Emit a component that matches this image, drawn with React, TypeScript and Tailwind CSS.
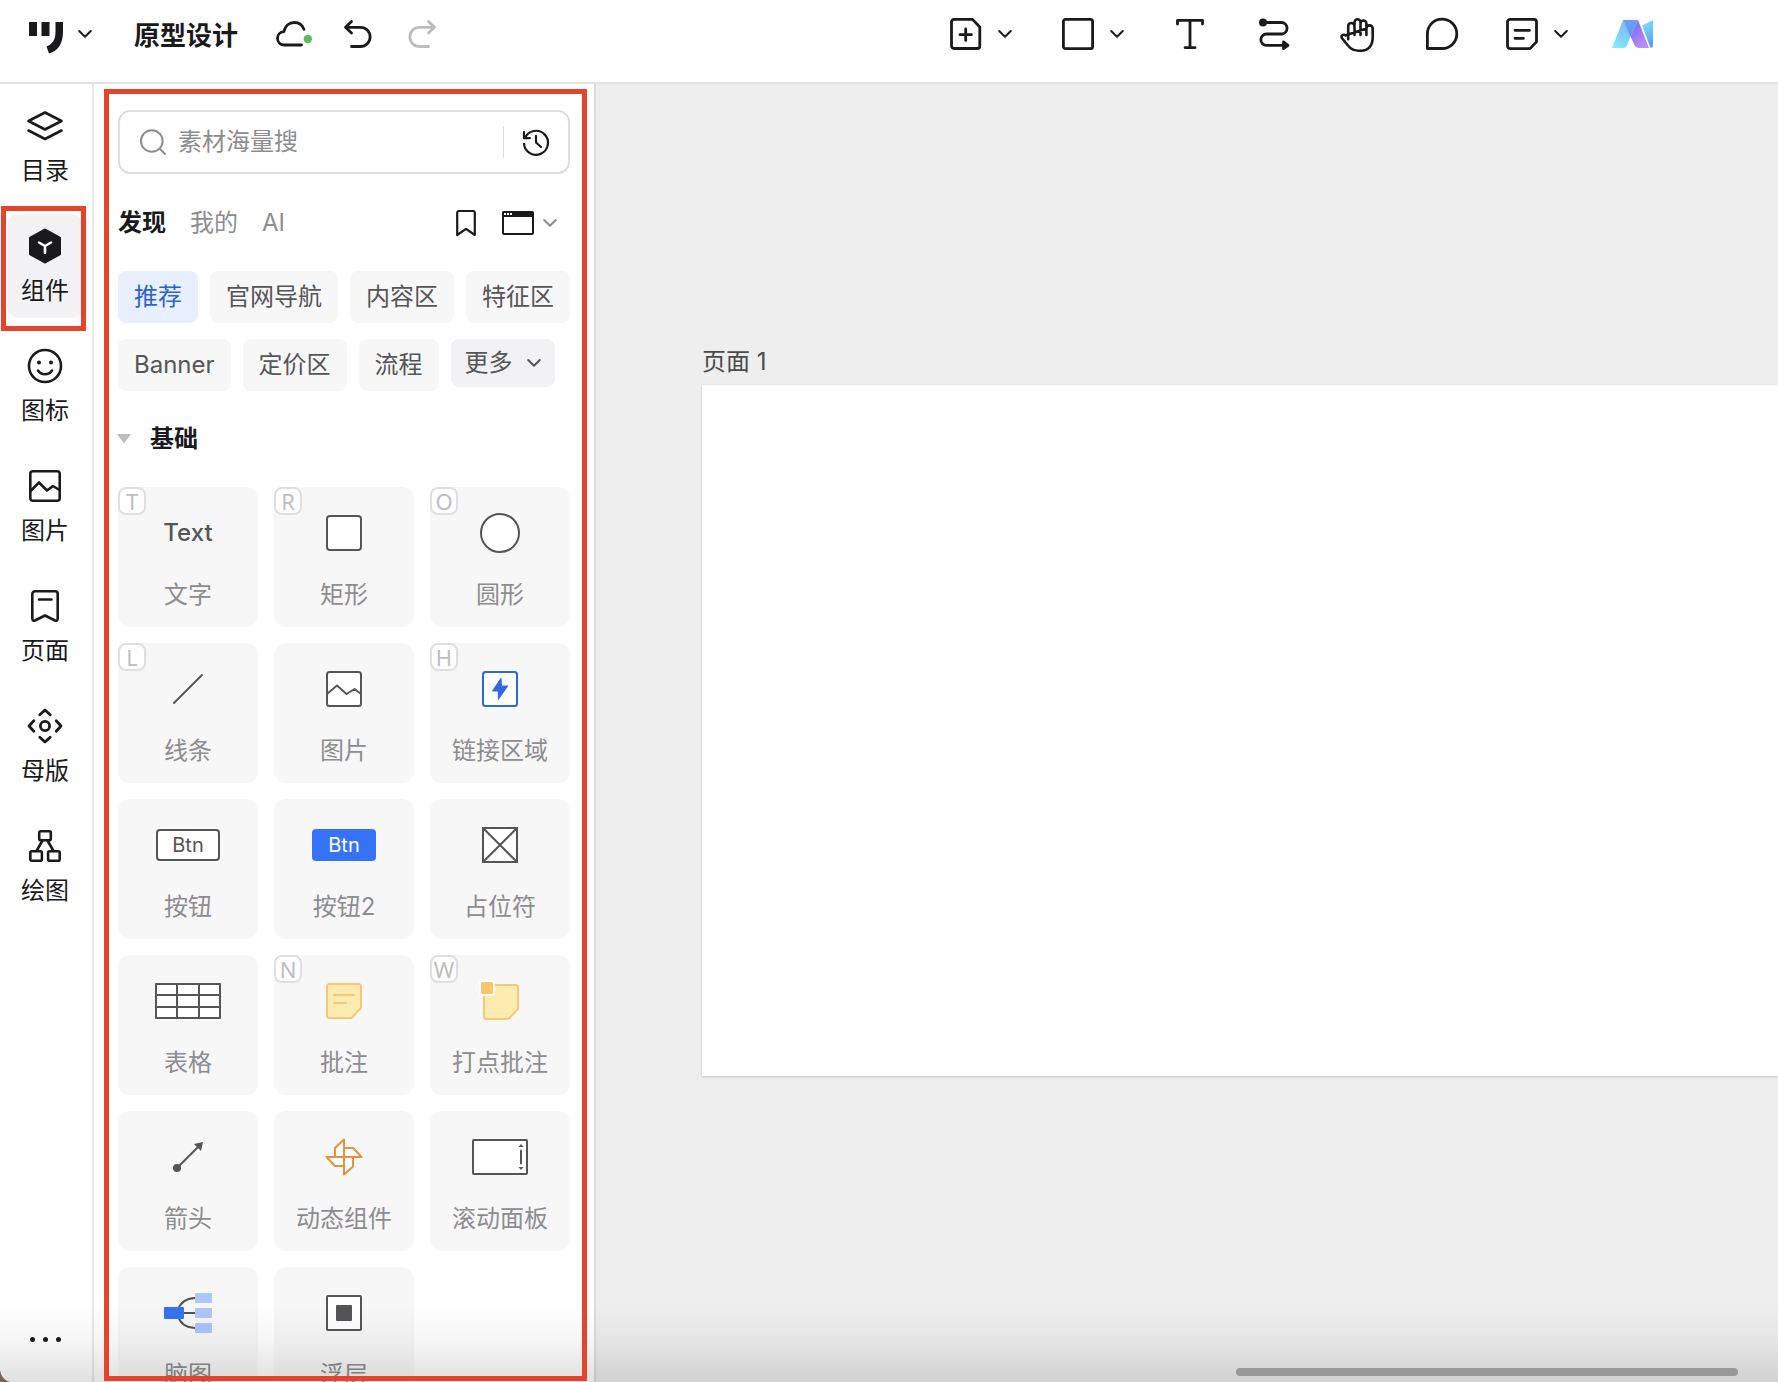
import type { ReactNode } from "react";

const INK = "#1a1a1c";
const GREY = "#555557";

function Icon({
  w,
  h,
  stroke = INK,
  sw = 2,
  children,
}: {
  w: number;
  h: number;
  stroke?: string;
  sw?: number;
  children: ReactNode;
}) {
  return (
    <svg
      width={w}
      height={h}
      viewBox={`0 0 ${w} ${h}`}
      fill="none"
      stroke={stroke}
      strokeWidth={sw}
      strokeLinecap="round"
      strokeLinejoin="round"
      className="shrink-0 overflow-visible"
      aria-hidden="true"
    >
      {children}
    </svg>
  );
}

function Chevron({ stroke = INK }: { stroke?: string }) {
  return (
    <Icon w={14} h={8} stroke={stroke} sw={2}>
      <path d="M1.2 1 7 6.8 12.8 1" />
    </Icon>
  );
}

/* ---------- top bar ---------- */

function Logo() {
  return (
    <Icon w={36} h={40} stroke="none">
      <g fill={INK}>
        <path d="M1 8h8v14H1zM13.500 8h8v14h-8zM27.500 8H35v9c0 12-4 19.500-14 22.500l-2.500-7C25 30 27.500 25.500 27.500 17.500z" />
      </g>
    </Icon>
  );
}

function Cloud() {
  return (
    <Icon w={36} h={26} sw={2.800}>
      <path d="M25.500 24H8.500C4.500 24 1.500 21.200 1.500 17.300c0-3.800 2.800-6.500 6.300-6.700C9 5 13 1.500 18.200 1.500c4.600 0 8.300 2.700 9.800 6.900" />
      <circle cx="31.800" cy="18" r="4.200" fill="#5fb95f" stroke="none" />
    </Icon>
  );
}

function Undo() {
  return (
    <Icon w={28} h={28} sw={2.800}>
      <path d="M7.500 1.500 1.500 7.300l6 5.700M2 7.300h14.500a9.600 9.600 0 0 1 0 19.200H7.500" />
    </Icon>
  );
}

function Redo() {
  return (
    <Icon w={28} h={28} sw={2.800} stroke="#bdbdbf">
      <path d="m20.500 1.500 6 5.800-6 5.700M26 7.300H11.500a9.600 9.600 0 0 0 0 19.200h9" />
    </Icon>
  );
}

function AddPage() {
  return (
    <Icon w={32} h={32} sw={2.800}>
      <path d="M4 1.400h18.500L29.800 9v19a2.500 2.500 0 0 1-2.500 2.500H4A2.500 2.500 0 0 1 1.500 28V4A2.500 2.500 0 0 1 4 1.400zM15.700 11v11.400M10 16.700h11.400" />
    </Icon>
  );
}

function RectTool() {
  return (
    <Icon w={32} h={32} sw={2.800}>
      <rect x="1.400" y="1.400" width="29.200" height="29.200" rx="2.200" />
    </Icon>
  );
}

function TextTool() {
  return (
    <Icon w={34} h={32} sw={2.800}>
      <path d="M3.500 6V2.400h25V6M16 2.400v27.200M11 29.600h10" />
    </Icon>
  );
}

function FlowTool() {
  return (
    <Icon w={32} h={32} sw={2.800}>
      <circle cx="5" cy="4.500" r="4" fill={INK} stroke="none" />
      <path d="M5 4.500h19a5.800 5.800 0 0 1 0 11.500H8.500a5.600 5.600 0 0 0 0 11.300H25" />
      <path d="M25.500 24 30 27.300l-4.500 3.300z" fill={INK} />
    </Icon>
  );
}

function HandTool() {
  return (
    <Icon w={34} h={36} sw={2.600}>
      <path d="M8.200 23.300V9.700a3.200 3.200 0 0 1 6.300 0V19M14.500 9V6.200a3 3 0 0 1 6 0V19M20.500 7.500a2.900 2.900 0 0 1 5.900 0V19M26.400 12.500a3.100 3.100 0 0 1 6.300 0V21.500c0 8-4.500 13.300-11.500 13.300h-2.700c-7.500 0-10-4.500-16.600-12.800-1.300-1.900 1.300-4.300 3.200-2.600z" />
    </Icon>
  );
}

function CommentTool() {
  return (
    <Icon w={32} h={32} sw={2.800}>
      <path d="M3.400 30.500V16.200a14.700 14.700 0 1 1 14.700 14.300z" />
    </Icon>
  );
}

function NoteTool() {
  return (
    <Icon w={32} h={32} sw={2.800}>
      <path d="M4 1.400h24a2.500 2.500 0 0 1 2.500 2.500v20L24 30.600H4A2.500 2.500 0 0 1 1.500 28V4A2.500 2.500 0 0 1 4 1.400zM9 12.300h14.500M9 20.300h8.500" />
    </Icon>
  );
}

function BrandMark() {
  return (
    <Icon w={42} h={28} stroke="none">
      <defs>
        <linearGradient id="bm-left" x1="0" y1="1" x2="0.600" y2="0">
          <stop offset="0" stopColor="#7ff0fb" />
          <stop offset="1" stopColor="#7fb9f4" />
        </linearGradient>
        <linearGradient id="bm-top" x1="0" y1="0" x2="0.500" y2="1">
          <stop offset="0" stopColor="#6fa0f6" />
          <stop offset="1" stopColor="#5b9bf3" />
        </linearGradient>
        <linearGradient id="bm-mid" x1="0" y1="0" x2="0.500" y2="1">
          <stop offset="0" stopColor="#7465ec" />
          <stop offset="1" stopColor="#b98cf6" />
        </linearGradient>
        <linearGradient id="bm-right" x1="0" y1="0" x2="0.300" y2="1">
          <stop offset="0" stopColor="#7feafa" />
          <stop offset="1" stopColor="#5fa2f5" />
        </linearGradient>
      </defs>
      <path d="M0 28 11 0l7.500 16-2.800 8c-1 3-2.700 4-5.200 4z" fill="url(#bm-left)" />
      <path d="M11 0h15l-7.500 17z" fill="url(#bm-top)" />
      <path d="M26 0 37 28H27.500c-3 0-4.500-1.500-5.500-4l-3.500-7.500z" fill="url(#bm-mid)" />
      <path d="M30 5.500 41 0v25c0 2-1 3-2.500 3z" fill="url(#bm-right)" />
    </Icon>
  );
}

function Tool({ label, menu, children }: { label: string; menu?: boolean; children: ReactNode }) {
  return (
    <button type="button" aria-label={label} className="flex items-center gap-4">
      {children}
      {menu && <Chevron />}
    </button>
  );
}

function TopBar() {
  return (
    <header className="flex h-[84px] shrink-0 items-center border-b-2 border-[#e2e2e3] bg-white pb-3.5 pl-7">
      <button type="button" aria-label="主菜单" className="flex items-center gap-3.5">
        <Logo />
        <Chevron />
      </button>
      <h1 className="ml-[42px] pt-1 text-[26px] leading-9 font-semibold">原型设计</h1>
      <div className="ml-[38px] flex items-center gap-8">
        <button type="button" aria-label="已同步">
          <Cloud />
        </button>
        <div className="flex items-center gap-9">
          <button type="button" aria-label="撤销">
            <Undo />
          </button>
          <button type="button" aria-label="重做">
            <Redo />
          </button>
        </div>
      </div>
      <div className="mr-[124px] ml-auto flex items-center gap-[50px]">
        <Tool label="添加页面" menu>
          <AddPage />
        </Tool>
        <Tool label="形状" menu>
          <RectTool />
        </Tool>
        <Tool label="文字">
          <TextTool />
        </Tool>
        <Tool label="流程">
          <FlowTool />
        </Tool>
        <Tool label="移动画布">
          <HandTool />
        </Tool>
        <Tool label="评论">
          <CommentTool />
        </Tool>
        <div className="flex items-center gap-11">
          <Tool label="批注" menu>
            <NoteTool />
          </Tool>
          <Tool label="AI 助手">
            <BrandMark />
          </Tool>
        </div>
      </div>
    </header>
  );
}

/* ---------- navigation rail ---------- */

const railItems: { label: string; icon: ReactNode; active?: boolean }[] = [
  {
    label: "目录",
    icon: (
      <Icon w={36} h={36} sw={2.600}>
        <path d="M18 4.500 34.500 13 18 21.500 1.500 13zM1.500 22.500 18 31l16.500-8.500" />
      </Icon>
    ),
  },
  {
    label: "组件",
    active: true,
    icon: (
      <Icon w={36} h={36} sw={2.600}>
        <path d="M18 2 32.500 10v16L18 34 3.500 26V10z" fill={INK} strokeWidth="3" />
        <path d="m12 14.500 6 3.500 6-3.500M18 18v7" stroke="#fff" />
      </Icon>
    ),
  },
  {
    label: "图标",
    icon: (
      <Icon w={36} h={36} sw={2.600}>
        <circle cx="18" cy="18" r="16" />
        <circle cx="12" cy="14.500" r="2" fill={INK} stroke="none" />
        <circle cx="24" cy="14.500" r="2" fill={INK} stroke="none" />
        <path d="M11 22.500c3.500 5 10.500 5 14 0" />
      </Icon>
    ),
  },
  {
    label: "图片",
    icon: (
      <Icon w={36} h={36} sw={2.600}>
        <rect x="3.300" y="3.300" width="29.400" height="29.400" rx="2.500" />
        <path d="m3.500 23 8.500-8.500 8 8 6-4.500 6.500 4" />
      </Icon>
    ),
  },
  {
    label: "页面",
    icon: (
      <Icon w={36} h={36} sw={2.600}>
        <path d="M8 3.300h20a2.700 2.700 0 0 1 2.700 2.700v24.500c0 2-1.200 2.700-2.700 2l-10-5-10 5c-1.500.7-2.700 0-2.700-2V6A2.700 2.700 0 0 1 8 3.300zM12 11.500h12.500" />
      </Icon>
    ),
  },
  {
    label: "母版",
    icon: (
      <Icon w={36} h={36} sw={2.800}>
        <circle cx="18" cy="18" r="4.600" />
        <path d="M12.800 6.800 18 2l5.200 4.800M12.800 29.200 18 34l5.200-4.800M6.800 12.800 2 18l4.800 5.200M29.200 12.800 34 18l-4.800 5.200" />
      </Icon>
    ),
  },
  {
    label: "绘图",
    icon: (
      <Icon w={36} h={36} sw={2.600}>
        <rect x="12.200" y="3.300" width="11.600" height="9" rx="1.500" />
        <rect x="3.300" y="23.300" width="11.600" height="9.400" rx="1.500" />
        <rect x="21.100" y="23.300" width="11.600" height="9.400" rx="1.500" />
        <path d="M15.500 12.500 9.500 23M20.500 12.500l6 10.500" />
      </Icon>
    ),
  },
];

function Rail() {
  return (
    <nav className="flex w-[94px] shrink-0 flex-col gap-4 border-r-2 border-[#e9e9eb] bg-white pt-[10px] pr-[9px] pl-[7px]">
      {railItems.map((item) => (
        <button
          key={item.label}
          type="button"
          className={
            item.active
              ? "relative flex flex-col items-center rounded-xl bg-[#f2f2f4] pt-3.5 pb-[11px]"
              : "flex flex-col items-center rounded-xl pt-3.5 pb-[11px]"
          }
        >
          {item.icon}
          <span className="mt-[11px] text-2xl leading-8">{item.label}</span>
          {item.active && (
            <span className="pointer-events-none absolute -top-2 -right-[3px] -bottom-[13px] -left-1.5 z-20 border-[5px] border-[#e5432b]" />
          )}
        </button>
      ))}
      <button type="button" aria-label="更多" className="mt-auto mb-10 flex justify-center gap-2">
        <span className="size-[5px] rounded-full bg-[#1a1a1c]" />
        <span className="size-[5px] rounded-full bg-[#1a1a1c]" />
        <span className="size-[5px] rounded-full bg-[#1a1a1c]" />
      </button>
    </nav>
  );
}

/* ---------- component panel ---------- */

const chips = ["推荐", "官网导航", "内容区", "特征区", "Banner", "定价区", "流程"];

const cards: { label: string; hotkey?: string; icon: ReactNode }[] = [
  {
    label: "文字",
    hotkey: "T",
    icon: <span className="text-2xl font-medium text-[#555557]">Text</span>,
  },
  { label: "矩形", hotkey: "R", icon: <span className="size-9 rounded-sm border-2 border-[#555557] bg-white" /> },
  { label: "圆形", hotkey: "O", icon: <span className="size-10 rounded-full border-2 border-[#555557] bg-white" /> },
  {
    label: "线条",
    hotkey: "L",
    icon: (
      <Icon w={30} h={30} stroke={GREY}>
        <path d="M1 29 29 1" />
      </Icon>
    ),
  },
  {
    label: "图片",
    icon: (
      <Icon w={36} h={36} stroke={GREY}>
        <rect x="1" y="1" width="34" height="34" rx="2.500" fill="#fff" />
        <path d="m1.500 22.500 9.500-8 9.500 8.500 8-5 6 4.500" />
      </Icon>
    ),
  },
  {
    label: "链接区域",
    hotkey: "H",
    icon: (
      <Icon w={36} h={36} stroke="#2f68cf">
        <rect x="1" y="1" width="34" height="34" rx="2.500" fill="#fff" />
        <path d="M18.800 7.500 10.500 20h5.800v8.500L25.700 15h-6z" fill="#2e68e0" stroke="#2e68e0" strokeWidth="1" />
      </Icon>
    ),
  },
  {
    label: "按钮",
    icon: (
      <span className="flex h-8 w-16 items-center justify-center rounded-sm border-2 border-[#555557] bg-white text-xl text-[#555557]">
        Btn
      </span>
    ),
  },
  {
    label: "按钮2",
    icon: (
      <span className="flex h-8 w-16 items-center justify-center rounded-sm bg-[#3672f8] text-xl text-white">
        Btn
      </span>
    ),
  },
  {
    label: "占位符",
    icon: (
      <Icon w={36} h={36} stroke={GREY}>
        <rect x="1" y="1" width="34" height="34" fill="#fff" strokeLinejoin="miter" />
        <path d="m1.500 1.500 33 33M34.500 1.500l-33 33" />
      </Icon>
    ),
  },
  {
    label: "表格",
    icon: (
      <Icon w={66} h={36} stroke={GREY}>
        <rect x="1" y="1" width="64" height="34" fill="#fff" />
        <path d="M1 12h64M1 24h64M22 1v34M44 1v34" />
      </Icon>
    ),
  },
  {
    label: "批注",
    hotkey: "N",
    icon: (
      <Icon w={36} h={36} stroke="#f5c878">
        <path d="M3.500 1h29A2.500 2.500 0 0 1 35 3.500V25L25.500 35h-22A2.500 2.500 0 0 1 1 32.500v-29A2.500 2.500 0 0 1 3.500 1z" fill="#fdebb0" />
        <path d="M8 12h20M8 20h12" />
      </Icon>
    ),
  },
  {
    label: "打点批注",
    hotkey: "W",
    icon: (
      <Icon w={38} h={40} stroke="#f5c878">
        <path d="M5.500 4h29A2.500 2.500 0 0 1 37 6.500V28L27.500 38h-22A2.500 2.500 0 0 1 3 35.500v-29A2.500 2.500 0 0 1 5.500 4z" fill="#fdebb0" />
        <rect x="-1" y="0" width="14" height="14" rx="2.500" fill="#f8c56a" stroke="#fff" />
      </Icon>
    ),
  },
  {
    label: "箭头",
    icon: (
      <Icon w={30} h={30} stroke={GREY}>
        <circle cx="4" cy="26" r="4" fill={GREY} stroke="none" />
        <path d="M4 26 25 5" />
        <path d="M30 0 28 9l-7-7z" fill={GREY} stroke="none" />
      </Icon>
    ),
  },
  {
    label: "动态组件",
    icon: (
      <Icon w={38} h={38} stroke="#e8913c">
        <path
          d="M19 1.500V19H10V10zM36.500 19H19v-9h9zM19 36.500V19h9v9.500zM1.500 19H19v9h-9z"
          fill="#fff"
        />
      </Icon>
    ),
  },
  {
    label: "滚动面板",
    icon: (
      <Icon w={56} h={36} stroke={GREY}>
        <rect x="1" y="1" width="54" height="34" rx="1" fill="#fff" />
        <path d="M49 11.500v13" />
        <path d="m49 5 2.500 3h-5zM49 31l2.500-3h-5z" fill={GREY} stroke="none" />
      </Icon>
    ),
  },
  {
    label: "脑图",
    icon: (
      <Icon w={48} h={40} stroke={GREY}>
        <path d="M14 17c2-7 8-11.500 17-12M20 20h11M14 23c2 7 8 11.500 17 12" />
        <g stroke="none">
          <rect x="0" y="14" width="20" height="12" rx="1" fill="#3672f8" />
          <rect x="31" y="0" width="17" height="10" rx="1" fill="#adc6f8" />
          <rect x="31" y="15" width="17" height="10" rx="1" fill="#adc6f8" />
          <rect x="31" y="30" width="17" height="10" rx="1" fill="#adc6f8" />
        </g>
      </Icon>
    ),
  },
  {
    label: "浮层",
    icon: (
      <Icon w={36} h={36} stroke={GREY}>
        <rect x="1" y="1" width="34" height="34" rx="1" fill="#fff" />
        <rect x="10" y="10" width="16" height="16" rx="1" fill={GREY} stroke="none" />
      </Icon>
    ),
  },
];

function SearchBox() {
  return (
    <div className="flex h-16 shrink-0 items-center rounded-xl border-2 border-[#dedee0] pl-5">
      <Icon w={26} h={26} stroke="#8d8d8f">
        <circle cx="11.800" cy="12" r="10.800" />
        <path d="m20 20 5 5" />
      </Icon>
      <input
        type="search"
        aria-label="搜索素材"
        placeholder="素材海量搜"
        className="ml-3 min-w-0 flex-1 text-2xl outline-none placeholder:text-[#8d8d8f]"
      />
      <button type="button" aria-label="搜索历史" className="flex h-8 items-center border-l border-[#dcdcde] px-[19px]">
        <Icon w={26} h={26} sw={2.200}>
          <path d="M1 14A12 12 0 1 0 2 9" strokeLinecap="butt" />
          <path d="M1 3.200v6h5.800M13 6.800v6.700l5 4.500" />
        </Icon>
      </button>
    </div>
  );
}

function Panel() {
  return (
    <aside className="relative flex w-[502px] shrink-0 flex-col overflow-hidden border-r-2 border-[#dcdcdd] bg-white px-6 pt-[26px]">
      <SearchBox />

      <div className="mt-[31px] flex items-center justify-between pr-[13px]">
        <div className="flex gap-6 text-2xl leading-9 text-[#8d8d8f]">
          <button type="button" className="font-bold text-[#1a1a1c]">
            发现
          </button>
          <button type="button">我的</button>
          <button type="button">AI</button>
        </div>
        <div className="flex items-center gap-[26px]">
          <button type="button" aria-label="收藏">
            <Icon w={20} h={26} sw={2.200}>
              <path d="M3 1h14a1.800 1.800 0 0 1 1.800 1.800V25L10 18.800 1.200 25V2.800A1.800 1.800 0 0 1 3 1z" />
            </Icon>
          </button>
          <button type="button" aria-label="窗口类型" className="flex items-center gap-[9px]">
            <Icon w={32} h={24}>
              <rect x="1" y="1" width="30" height="22" rx="1" />
              <path d="M1 1h30v4.500H1z" fill={INK} strokeWidth="1" />
              <path d="M2 3h2M5 3h2M8 3h2" stroke="#fff" strokeLinecap="butt" />
            </Icon>
            <Chevron stroke="#8d8d8f" />
          </button>
        </div>
      </div>

      <div className="mt-[30px] flex flex-wrap items-start gap-x-3 gap-y-4 text-2xl leading-9 text-[#555557]">
        {chips.map((chip, i) => (
          <button
            key={chip}
            type="button"
            className={
              i === 0
                ? "rounded-lg bg-[#e8effe] px-4 py-2 text-[#2e62cc]"
                : "rounded-lg bg-[#f7f7f7] px-4 py-2"
            }
          >
            {chip}
          </button>
        ))}
        <button type="button" className="flex items-center gap-3.5 rounded-lg bg-[#f2f2f4] px-3.5 py-1.5">
          更多
          <Chevron stroke={GREY} />
        </button>
      </div>

      <button type="button" className="mt-[30px] -ml-px flex items-center gap-[19px] text-2xl leading-9 font-bold">
        <svg width="14" height="10" viewBox="0 0 14 10" fill="#bdbdbd" aria-hidden="true">
          <path d="M0 0h14L7 9.500z" />
        </svg>
        基础
      </button>

      <div className="mt-[30px] grid grid-cols-3 gap-4">
        {cards.map((card) => (
          <button
            key={card.label}
            type="button"
            className="relative flex flex-col items-center rounded-xl bg-[#f7f7f8] pt-5 pb-4 text-[#8d8d8f]"
          >
            {card.hotkey && (
              <kbd className="absolute top-0 left-0 flex size-7 items-center justify-center rounded-lg border-2 border-[#dfdfe1] bg-white font-['Noto_Sans'] text-[22px] leading-6 text-[#bdbdbf]">
                {card.hotkey}
              </kbd>
            )}
            <span className="flex h-[52px] items-center justify-center">{card.icon}</span>
            <span className="mt-5 text-2xl leading-8">{card.label}</span>
          </button>
        ))}
      </div>

      <div className="pointer-events-none absolute top-[5px] right-[7px] bottom-px left-[10px] z-20 border-[5px] border-[#e5432b]" />
    </aside>
  );
}

/* ---------- canvas ---------- */

function Canvas() {
  return (
    <main className="relative min-w-0 flex-1 overflow-hidden bg-[#eeeeee] pt-[262px] pl-[106px]">
      <h2 className="mb-[7px] text-2xl leading-8 text-[#4a4a4c]">页面 1</h2>
      <div className="h-[691px] bg-white shadow-[0_1px_2px_rgba(0,0,0,0.18)]" />
      <div className="absolute right-10 bottom-1.5 z-20 h-2 w-[502px] rounded-full bg-[#999999]" />
    </main>
  );
}

export default function App() {
  return (
    <div className="relative flex h-screen flex-col overflow-hidden bg-white font-[Inter,'Noto_Sans_CJK_SC',sans-serif] text-[#1a1a1c]">
      <TopBar />
      <div className="flex min-h-0 flex-1">
        <Rail />
        <Panel />
        <Canvas />
      </div>
      <div className="pointer-events-none absolute inset-x-0 bottom-0 z-10 h-20 bg-linear-to-b from-black/0 via-black/4 to-black/12" />
      <svg width="10" height="12" viewBox="0 0 10 12" className="absolute bottom-0 left-0 z-10" aria-hidden="true">
        <path d="M0 0c1 6 4 10 10 12H0z" fill="#80604f" />
      </svg>
    </div>
  );
}
